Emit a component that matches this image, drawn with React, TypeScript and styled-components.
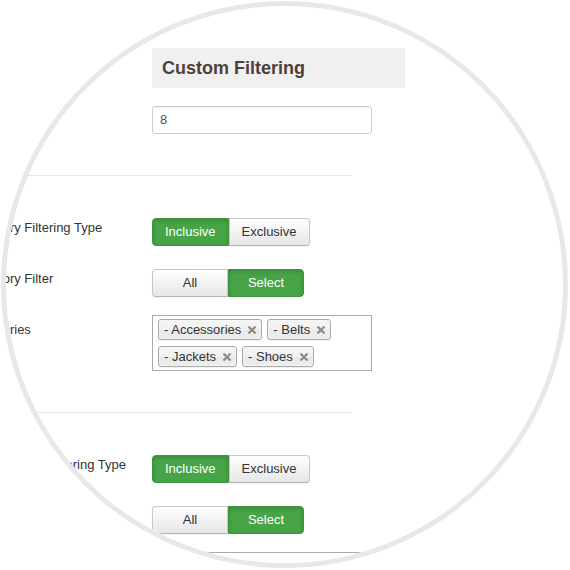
import React from 'react';
import styled, { createGlobalStyle } from 'styled-components';

const Global = createGlobalStyle`
  html, body { margin: 0; padding: 0; background: #fff; }
  body {
    font-family: "Liberation Sans", Arial, Helvetica, sans-serif;
    font-size: 13px;
    color: #333;
  }
`;

const Stage = styled.div`
  width: 570px;
  height: 570px;
  padding: 1px;
  box-sizing: border-box;
  background: #fff;
  overflow: hidden;
`;

const Circle = styled.div`
  width: 567px;
  height: 567px;
  box-sizing: border-box;
  border-radius: 50%;
  border: 5px solid #e8e8e8;
  overflow: hidden;
  background: #fff;
  padding-top: 42px;
`;

const Form = styled.div`
  margin-left: -38px;
  display: flex;
  flex-direction: column;
`;

const ControlGroup = styled.div<{ $mb?: number }>`
  display: flex;
  align-items: flex-start;
  margin-bottom: ${(p) => p.$mb ?? 0}px;
`;

const Label = styled.div<{ $pt?: number }>`
  width: 184px;
  flex-shrink: 0;
  padding-top: ${(p) => p.$pt ?? 1}px;
  line-height: 18px;
  white-space: nowrap;
  color: #333;
`;

const Header = styled.h3`
  margin: 0;
  width: 253px;
  height: 40px;
  box-sizing: border-box;
  padding-left: 10px;
  background: #f0f0f0;
  font-size: 18px;
  font-weight: bold;
  line-height: 40px;
  color: #4f3f3b;
  white-space: nowrap;
`;

const TextInput = styled.div`
  width: 220px;
  height: 28px;
  box-sizing: border-box;
  border: 1px solid #ccc;
  border-radius: 3px;
  padding: 0 7px;
  line-height: 26px;
  color: #555;
  box-shadow: inset 0 1px 1px rgba(0, 0, 0, 0.05);
`;

const Divider = styled.div`
  width: 384px;
  height: 1px;
  background: #e6e6e6;
  margin: 41px 0 42px;
`;

const BtnGroup = styled.div`
  display: inline-flex;
`;

const Btn = styled.div<{ $active?: boolean }>`
  min-width: 76px;
  height: 28px;
  box-sizing: border-box;
  padding: 0 12px;
  line-height: 26px;
  text-align: center;
  border: 1px solid;
  white-space: nowrap;
  font-size: 13px;
  background: ${(p) => (p.$active ? '#47a447' : 'linear-gradient(#ffffff, #e6e6e6)')};
  border-color: ${(p) => (p.$active ? '#3e923e' : '#c8c8c8 #c8c8c8 #b3b3b3')};
  color: ${(p) => (p.$active ? '#fff' : '#333')};
  box-shadow: ${(p) =>
    p.$active ? 'inset 0 2px 4px rgba(0,0,0,0.15)' : '0 1px 2px rgba(0,0,0,0.05)'};
  &:first-child { border-radius: 4px 0 0 4px; }
  &:last-child { border-radius: 0 4px 4px 0; }
`;

const TagBox = styled.div`
  width: 220px;
  min-height: 30px;
  box-sizing: border-box;
  border: 1px solid #aaa;
  padding: 0 0 0 5px;
  display: flex;
  flex-wrap: wrap;
  align-items: flex-start;
  background: #fff;
`;

const Placeholder = styled.span`
  padding: 5px 0;
  line-height: 18px;
  color: #999;
  white-space: nowrap;
`;

const Tag = styled.div`
  display: inline-flex;
  align-items: center;
  gap: 7px;
  margin: 3px 5px 3px 0;
  padding: 3px 5px 3px 5px;
  border: 1px solid #aaa;
  border-radius: 3px;
  line-height: 13px;
  color: #333;
  background: linear-gradient(#f4f4f4 20%, #f0f0f0 50%, #e8e8e8 52%, #eeeeee);
  box-shadow: inset 0 0 2px #fff, 0 1px 0 rgba(0, 0, 0, 0.05);
  white-space: nowrap;
`;

const CloseIcon = styled.svg`
  width: 8px;
  height: 8px;
  flex-shrink: 0;
`;

const Close = () => (
  <CloseIcon viewBox="0 0 8 8">
    <path d="M1.2 1.2 L6.8 6.8 M6.8 1.2 L1.2 6.8" stroke="#8e8e86" strokeWidth="2.3" strokeLinecap="round" />
  </CloseIcon>
);

const Toggle = ({ options, active }: { options: string[]; active: number }) => (
  <BtnGroup>
    {options.map((o, i) => (
      <Btn key={o} $active={i === active}>
        {o}
      </Btn>
    ))}
  </BtnGroup>
);

const Tags = ({ items, placeholder }: { items: string[]; placeholder?: string }) => (
  <TagBox>
    {items.map((t) => (
      <Tag key={t}>
        <span>{t}</span>
        <Close />
      </Tag>
    ))}
    {items.length === 0 && placeholder ? <Placeholder>{placeholder}</Placeholder> : null}
  </TagBox>
);

export default function App() {
  return (
    <>
      <Global />
      <Stage>
        <Circle>
          <Form>
            <ControlGroup $mb={18}>
              <Label />
              <Header>Custom Filtering</Header>
            </ControlGroup>
            <ControlGroup>
              <Label $pt={5}>Products Limit</Label>
              <TextInput>8</TextInput>
            </ControlGroup>

            <Divider />

            <ControlGroup $mb={23}>
              <Label>Category Filtering Type</Label>
              <Toggle options={['Inclusive', 'Exclusive']} active={0} />
            </ControlGroup>
            <ControlGroup $mb={18}>
              <Label>Category Filter</Label>
              <Toggle options={['All', 'Select']} active={1} />
            </ControlGroup>
            <ControlGroup>
              <Label $pt={6}>Categories</Label>
              <Tags items={['- Accessories', '- Belts', '- Jackets', '- Shoes']} />
            </ControlGroup>

            <Divider />

            <ControlGroup $mb={23}>
              <Label>Manufacturer Filtering Type</Label>
              <Toggle options={['Inclusive', 'Exclusive']} active={0} />
            </ControlGroup>
            <ControlGroup $mb={18}>
              <Label>Manufacturer Filter</Label>
              <Toggle options={['All', 'Select']} active={1} />
            </ControlGroup>
            <ControlGroup>
              <Label $pt={6}>Manufacturers</Label>
              <Tags items={[]} placeholder="Select some options" />
            </ControlGroup>
          </Form>
        </Circle>
      </Stage>
    </>
  );
}
